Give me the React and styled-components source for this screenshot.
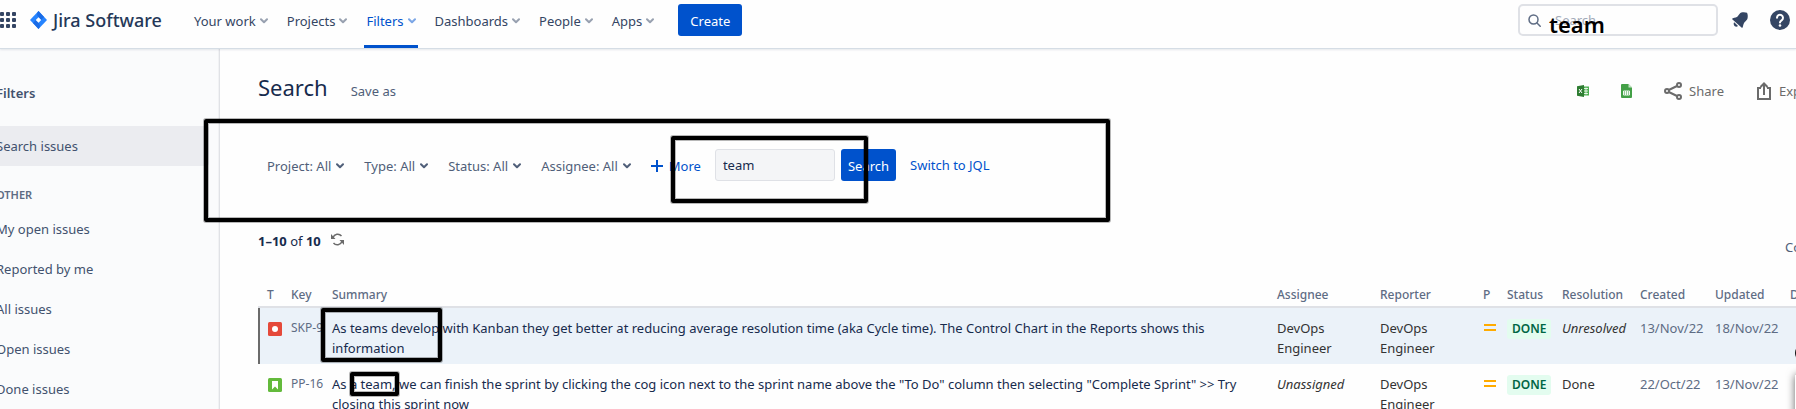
import React from 'react';
import styled, { createGlobalStyle, css } from 'styled-components';

const Global = createGlobalStyle`
  *, *::before, *::after { box-sizing: border-box; }
  body { margin: 0; background: #fefefe; }
  body, button, input { font-family: "Noto Sans", "Open Sans", sans-serif; font-size: 13px; }
  a { text-decoration: none; color: inherit; }
  button { border: 0; background: none; padding: 0; color: inherit; cursor: pointer; }
`;

const Page = styled.div`
  display: flex;
  flex-direction: column;
  height: 100vh;
  overflow: hidden;
  line-height: 20px;
  color: #172b4d;
`;

/* ---------- header ---------- */
const Header = styled.header`
  position: relative;
  z-index: 2;
  display: flex;
  align-items: center;
  height: 49px;
  padding: 0 6px 8px 0;
  background: #fefefe;
  border-bottom: 1px solid #d5dde5;
  box-shadow: 0 1px 2px rgba(9, 30, 66, 0.1);
  flex: none;
`;

const Switcher = styled.button`
  display: flex;
  margin-right: 14px;
`;

const Brand = styled.a`
  display: flex;
  align-items: center;
  gap: 6px;
  width: 162px;
  font-size: 18px;
  font-weight: 500;
  white-space: nowrap;
  color: #253858;
`;

const Nav = styled.nav`
  display: flex;
  align-self: stretch;
  margin-right: 7px;
`;

const NavLink = styled.a`
  position: relative;
  display: flex;
  align-items: center;
  gap: 4px;
  height: 48px;
  margin-right: 15px;
  padding: 0 2px 6px;
  color: ${(p) => (p.$active ? '#0052cc' : '#344563')};
  ${(p) => p.$active && css`border-bottom: 3px solid #0052cc; padding-bottom: 3px;`}
  svg { color: ${(p) => (p.$active ? '#7ba6e6' : '#98a1b0')}; }
`;

const Primary = styled.button`
  height: 32px;
  padding: 2px ${(p) => (p.$wide ? 12 : 7)}px 0;
  border-radius: 3px;
  background: #0052cc;
  color: #fff;
  line-height: 20px;
`;

const GlobalSearch = styled.label`
  position: relative;
  display: flex;
  align-items: center;
  gap: 12px;
  width: 200px;
  height: 32px;
  margin-left: auto;
  padding: 0 8px;
  border: 2px solid #dfe1e6;
  border-radius: 5px;
  color: #5e6c84;
  input {
    min-width: 0;
    flex: 1;
    border: 0;
    outline: 0;
    background: none;
    color: #172b4d;
  }
  input::placeholder { color: #a3abb9; opacity: 1; }
`;

const BigNote = styled.span`
  position: absolute;
  left: 29px;
  top: 4px;
  font-size: 22px;
  font-weight: 600;
  line-height: 28px;
  color: #000;
`;

const HeaderIcon = styled.button`
  display: flex;
  margin-left: ${(p) => p.$gap}px;
`;

/* ---------- body ---------- */
const Body = styled.div`
  display: flex;
  flex: 1;
  min-height: 0;
`;

const Sidebar = styled.aside`
  width: 220px;
  flex: none;
  padding: 34px 10px 0 0;
  background: #fafbfc;
  border-right: 1px solid #e0e2e6;
  box-shadow: inset -1px 0 0 #f1f2f4;
  overflow: hidden;
  color: #42526e;
`;

const SideTitle = styled.h2`
  margin: 0 0 23px -4px;
  font-size: 13px;
  font-weight: 600;
  line-height: 20px;
`;

const SideHeading = styled.h3`
  margin: 19px 0 4px -4px;
  font-size: 11px;
  font-weight: 600;
  line-height: 20px;
  color: #5e6c84;
`;

const SideLink = styled.a`
  display: block;
  height: 40px;
  margin-left: -4px;
  line-height: 40px;
  border-radius: 3px;
  background: ${(p) => (p.$active ? '#ebecf0' : 'none')};
`;

const Main = styled.main`
  position: relative;
  flex: 1;
  min-width: 0;
  padding: 22px 0 0 38px;
`;

const TitleRow = styled.div`
  display: flex;
  align-items: center;
  height: 36px;
  h1 {
    margin: 0 23px 4px 0;
    font-size: 22px;
    font-weight: 400;
    line-height: 28px;
  }
`;

const Quiet = styled.button`
  display: flex;
  align-items: center;
  gap: 7px;
  margin-top: 4px;
  color: ${(p) => (p.$gray ? '#6b6b6b' : '#505f79')};
`;

const IconButton = styled.button`
  display: flex;
  margin-top: 4px;
`;

const Tools = styled.div`
  display: flex;
  align-items: center;
  margin-left: auto;
  margin-right: -23px;
  gap: 32px;
`;

const FilterRow = styled.form`
  display: flex;
  align-items: center;
  height: 32px;
  margin: 42px 0 44px;
  padding-left: 9px;
  color: #505f79;
`;

const FilterButton = styled.button`
  display: flex;
  align-items: center;
  gap: 5px;
  margin-right: 20px;
  padding-top: 2px;
  white-space: nowrap;
`;

const More = styled.button`
  display: flex;
  align-items: center;
  gap: 6px;
  margin-right: 14px;
  padding-top: 2px;
  color: #0052cc;
`;

const TextBox = styled.input`
  width: 120px;
  height: 32px;
  margin-right: 6px;
  padding: 0 7px;
  border: 1px solid #dfe1e6;
  border-radius: 3px;
  background: #f4f5f7;
  color: #172b4d;
`;

const JqlLink = styled.a`
  margin-left: 14px;
  color: #0052cc;
`;

const CountRow = styled.div`
  display: flex;
  align-items: center;
  justify-content: space-between;
  height: 32px;
  margin-right: -43px;
  ${Quiet} { margin-top: 12px; }
`;

const Count = styled.span`
  display: flex;
  align-items: center;
  gap: 10px;
  b { font-weight: 700; }
  svg { margin-bottom: 4px; }
`;

/* ---------- issue table ---------- */
const Scroller = styled.div`
  margin: 27px -63px 0 0;
`;

const Table = styled.table`
  width: 100%;
  table-layout: fixed;
  border-collapse: separate;
  border-spacing: 0;
`;

const Col = styled.col`
  width: ${(p) => (p.$w ? `${p.$w}px` : 'auto')};
`;

const Th = styled.th`
  height: 24px;
  padding: 0 0 0 9px;
  border-bottom: 2px solid #dfe1e6;
  font-size: 12px;
  font-weight: 500;
  line-height: 20px;
  text-align: left;
  color: #5e6c84;
`;

const Td = styled.td`
  height: 56px;
  padding: 10px 0 6px 9px;
  vertical-align: top;
  color: ${(p) => p.$color || '#333'};
  font-size: ${(p) => (p.$small ? 12 : 13)}px;
  font-style: ${(p) => (p.$italic ? 'italic' : 'normal')};
  white-space: ${(p) => (p.$nowrap ? 'nowrap' : 'normal')};
  svg { display: block; margin: 4px 0 0 1px; }
`;

const Row = styled.tr`
  background: ${(p) => (p.$selected ? '#ebf2f9' : 'none')};
  td:first-child { box-shadow: ${(p) => (p.$selected ? 'inset 2px 0 0 #6b6b6b' : 'none')}; }
`;

const Badge = styled.span`
  display: inline-block;
  padding: 0 5px;
  border-radius: 3px;
  background: #e3fcef;
  color: #006644;
  font-size: 12px;
  font-weight: 600;
  line-height: 20px;
`;

/* ---------- hand-drawn marks over the page ---------- */
const Mark = styled.div`
  position: absolute;
  z-index: 3;
  left: ${(p) => p.$x}px;
  top: ${(p) => p.$y}px;
  width: ${(p) => p.$w}px;
  height: ${(p) => p.$h}px;
  border: 4px solid #000;
  border-radius: 2px;
  box-shadow: 0 0 0 1px rgba(0, 0, 0, 0.28), inset 0 0 0 1px rgba(0, 0, 0, 0.28);
  pointer-events: none;
`;

const EdgePanel = styled.div`
  position: absolute;
  right: -19px;
  top: 326px;
  width: 20px;
  height: 100px;
  background: #fff;
  box-shadow: 0 0 8px rgba(0, 0, 0, 0.6);
`;

const EdgeDot = styled.div`
  position: absolute;
  right: -17px;
  top: 295px;
  width: 18px;
  height: 18px;
  border-radius: 50%;
  background: #111;
`;

const Chevron = () => (
  <svg width="8" height="6" viewBox="0 0 8 6" fill="none" stroke="currentColor" strokeWidth="2" strokeLinecap="round" strokeLinejoin="round" aria-hidden="true">
    <path d="M1 1.2 4 4.2 7 1.2" />
  </svg>
);

const JiraMark = () => (
  <svg width="17" height="18" viewBox="0 0 17 18" aria-hidden="true">
    <path d="M8.5 0 17 9 8.5 18 0 9Z" fill="#2684ff" />
    <path d="M8.5 0C6.6 2 6.6 4.4 8.5 6.3L11.200 9 14 6Z" fill="#1a6be6" />
    <path d="M8.500 18C10.400 16 10.400 13.600 8.500 11.700L5.800 9 3 12Z" fill="#1a6be6" />
    <path d="M8.500 6.300 11.200 9 8.500 11.700 5.800 9Z" fill="#fff" />
  </svg>
);

const navItems = ['Your work', 'Projects', 'Filters', 'Dashboards', 'People', 'Apps'];
const sideItems = ['My open issues', 'Reported by me', 'All issues', 'Open issues', 'Done issues'];
const filters = ['Project: All', 'Type: All', 'Status: All', 'Assignee: All'];
const columns = [
  ['T', 24], ['Key', 41], ['Summary', 0], ['Assignee', 103], ['Reporter', 103], ['P', 24],
  ['Status', 55], ['Resolution', 78], ['Created', 75], ['Updated', 75], ['Due', 78],
];
const issues = [
  {
    type: 'bug', key: 'SKP-9', assignee: 'DevOps Engineer', resolution: 'Unresolved',
    created: '13/Nov/22', updated: '18/Nov/22', selected: true,
    summary: 'As teams develop with Kanban they get better at reducing average resolution time (aka Cycle time). The Control Chart in the Reports shows this information',
  },
  {
    type: 'story', key: 'PP-16', assignee: 'Unassigned', resolution: 'Done',
    created: '22/Oct/22', updated: '13/Nov/22', selected: false,
    summary: 'As a team, we can finish the sprint by clicking the cog icon next to the sprint name above the "To Do" column then selecting "Complete Sprint" >> Try closing this sprint now',
  },
];

const TypeIcon = ({ type }) => (
  <svg width="14" height="14" viewBox="0 0 14 14" role="img" aria-label={type}>
    <rect width="14" height="14" rx="1.500" fill={type === 'bug' ? '#e5493a' : '#63ba3c'} />
    {type === 'bug' ? <circle cx="7" cy="7" r="3" fill="#fff" /> : <path d="M4 3h6v8.500L7 8.500 4 11.500Z" fill="#fff" />}
  </svg>
);

export default function App() {
  return (
    <Page>
      <Global />
      <Header>
        <Switcher aria-label="Switch to">
          <svg width="16" height="16" viewBox="0 0 16 16" fill="#344563">
            {[0, 6, 12].map((y) => [0, 6, 12].map((x) => <rect key={`${x}-${y}`} x={x} y={y} width="4" height="4" rx="1" />))}
          </svg>
        </Switcher>
        <Brand href="#"><JiraMark />Jira Software</Brand>
        <Nav>
          {navItems.map((item) => (
            <NavLink key={item} href="#" $active={item === 'Filters'}>{item}<Chevron /></NavLink>
          ))}
        </Nav>
        <Primary $wide type="button">Create</Primary>
        <GlobalSearch>
          <svg width="13" height="13" viewBox="0 0 13 13" fill="none" stroke="currentColor" strokeWidth="1.500" strokeLinecap="round" aria-hidden="true">
            <circle cx="5.500" cy="5.500" r="4.500" /><path d="m9 9 3.200 3.200" />
          </svg>
          <input type="search" placeholder="Search" aria-label="Search" />
          <BigNote>team</BigNote>
        </GlobalSearch>
        <HeaderIcon $gap={14} aria-label="Notifications">
          <svg width="16" height="16" viewBox="0 0 16 16" fill="#344563">
            <path d="M9.300.600C11 .100 13.500.200 15 .800c.800 1.700 1 4 .500 5.800-.400 1.400-1.500 2.300-2.800 3.500-1 1-1.300 2.800-2 5.100-.200.600-.800.700-1.200.300L.500 7.500C0 7 .200 6.400.800 6.200c2.200-.600 4-1 5-2C7 2.900 7.900 1.100 9.300.600Z" />
            <path d="M2.200 10.200 6 14c-1 .900-2.500.900-3.500-.100s-1.100-2.700-.300-3.700Z" />
          </svg>
        </HeaderIcon>
        <HeaderIcon $gap={22} aria-label="Help">
          <svg width="20" height="20" viewBox="0 0 20 20">
            <circle cx="10" cy="10" r="10" fill="#344563" />
            <path d="M7 7.800a3 3 0 1 1 4.600 2.500c-1 .700-1.600 1.100-1.600 2.200" fill="none" stroke="#fff" strokeWidth="2" strokeLinecap="round" />
            <circle cx="10" cy="15.500" r="1.300" fill="#fff" />
          </svg>
        </HeaderIcon>
      </Header>

      <Body>
        <Sidebar>
          <SideTitle>Filters</SideTitle>
          <SideLink href="#" $active>Search issues</SideLink>
          <SideHeading>OTHER</SideHeading>
          {sideItems.map((item) => <SideLink key={item} href="#">{item}</SideLink>)}
        </Sidebar>

        <Main>
          <TitleRow>
            <h1>Search</h1>
            <Quiet type="button">Save as</Quiet>
            <Tools>
              <IconButton type="button" aria-label="Open in Excel">
                <svg width="12" height="12" viewBox="0 0 12 12">
                  <rect x="6" y="1.500" width="6" height="9" fill="#4caf50" />
                  <path d="M7 3.500h4M7 6h4M7 8.500h4M9 2.500v7" stroke="#fff" strokeWidth=".8" />
                  <path d="M0 1.200 7 0v12L0 10.800Z" fill="#2e7d32" />
                  <path d="m2 4 3 4M5 4 2 8" stroke="#fff" strokeWidth="1" />
                </svg>
              </IconButton>
              <IconButton type="button" aria-label="Open in Sheets">
                <svg width="11" height="14" viewBox="0 0 11 14">
                  <path d="M1 0h6.500L11 3.500V13a1 1 0 0 1-1 1H1a1 1 0 0 1-1-1V1a1 1 0 0 1 1-1Z" fill="#43a047" />
                  <path d="M7.500 0 11 3.500H7.500Z" fill="#c8e6c9" />
                  <path d="M2.500 7h6v4h-6ZM2.500 9h6M4.500 7v4M6.500 7v4" fill="none" stroke="#fff" strokeWidth=".9" />
                </svg>
              </IconButton>
              <Quiet $gray type="button">
                <svg width="18" height="18" viewBox="0 0 18 18" fill="none" stroke="currentColor" strokeWidth="2" aria-hidden="true">
                  <path d="M4.800 8 13 4M4.800 10 13 14" />
                  <circle cx="3" cy="9" r="2" /><circle cx="15" cy="3" r="2" /><circle cx="15" cy="15" r="2" />
                </svg>
                Share
              </Quiet>
              <Quiet $gray type="button">
                <svg width="16" height="18" viewBox="0 0 16 18" fill="none" stroke="currentColor" strokeWidth="2" aria-hidden="true">
                  <path d="M5 6H2v11h12V6h-3M8 13V2M4.500 5 8 1.500 11.500 5" />
                </svg>
                Export
              </Quiet>
            </Tools>
          </TitleRow>

          <FilterRow onSubmit={(e) => e.preventDefault()}>
            {filters.map((f) => <FilterButton key={f} type="button">{f}<Chevron /></FilterButton>)}
            <More type="button">
              <svg width="12" height="12" viewBox="0 0 12 12" stroke="currentColor" strokeWidth="2" aria-hidden="true"><path d="M6 0v12M0 6h12" /></svg>
              More
            </More>
            <TextBox type="text" defaultValue="team" aria-label="Contains text" />
            <Primary type="submit">Search</Primary>
            <JqlLink href="#">Switch to JQL</JqlLink>
          </FilterRow>

          <CountRow>
            <Count>
              <span><b>1–10</b> of <b>10</b></span>
              <svg width="13" height="13" viewBox="0 0 13 13" fill="none" stroke="#6b6b6b" strokeWidth="1.500" aria-hidden="true">
                <path d="M2 4.500A5 5 0 0 1 10.500 3M11 8.500A5 5 0 0 1 2.500 10" />
                <path d="M0 1v5h4.500ZM13 12V7H8.500Z" fill="#6b6b6b" stroke="none" />
              </svg>
            </Count>
            <Quiet type="button">Columns</Quiet>
          </CountRow>

          <Scroller>
            <Table>
              <colgroup>{columns.map(([name, w]) => <Col key={name} $w={w} />)}</colgroup>
              <thead><tr>{columns.map(([name]) => <Th key={name} scope="col">{name}</Th>)}</tr></thead>
              <tbody>
                {issues.map((i) => (
                  <Row key={i.key} $selected={i.selected}>
                    <Td><TypeIcon type={i.type} /></Td>
                    <Td $nowrap $small $color="#5e6c84"><a href="#">{i.key}</a></Td>
                    <Td $color="#172b4d"><a href="#">{i.summary}</a></Td>
                    <Td $italic={i.assignee === 'Unassigned'}>{i.assignee}</Td>
                    <Td>DevOps Engineer</Td>
                    <Td>
                      <svg width="12" height="12" viewBox="0 0 12 12" fill="#ffab00" role="img" aria-label="Medium priority">
                        <rect y="2" width="12" height="2" /><rect y="7" width="12" height="2" />
                      </svg>
                    </Td>
                    <Td><Badge>DONE</Badge></Td>
                    <Td $italic={i.resolution === 'Unresolved'}>{i.resolution}</Td>
                    <Td $color="#5e6c84" $nowrap>{i.created}</Td>
                    <Td $color="#5e6c84" $nowrap>{i.updated}</Td>
                    <Td />
                  </Row>
                ))}
              </tbody>
            </Table>
          </Scroller>

          <Mark $x={-16} $y={70} $w={906} $h={103} />
          <Mark $x={451} $y={87} $w={197} $h={67} />
          <Mark $x={101} $y={259} $w={121} $h={54} />
          <Mark $x={130} $y={323} $w={49} $h={24} />
          <EdgeDot />
          <EdgePanel />
        </Main>
      </Body>
    </Page>
  );
}
